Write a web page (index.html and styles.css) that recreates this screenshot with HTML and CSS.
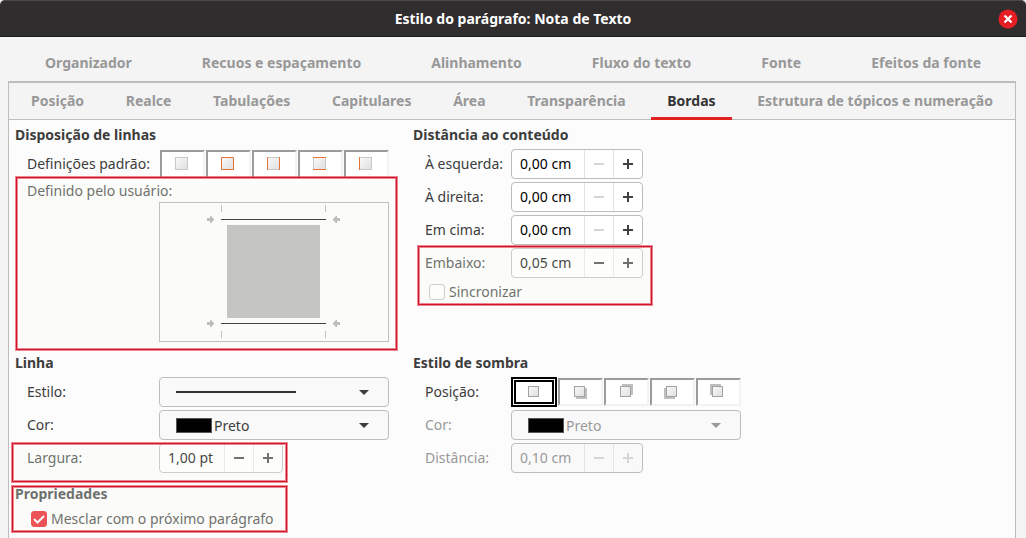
FILE: index.html
```html
<!DOCTYPE html>
<html lang="pt-BR">
<head>
<meta charset="utf-8">
<title>Estilo do parágrafo: Nota de Texto</title>
<link rel="stylesheet" href="styles.css">
</head>
<body>
<main class="dialog">
  <header class="titlebar">
    <h1 class="title">Estilo do parágrafo: Nota de Texto</h1>
    <button class="close" type="button" aria-label="Fechar">
      <svg width="20" height="20" viewBox="0 0 20 20"><circle cx="10" cy="10" r="9.5" fill="#e71d24"/><path d="M6.5 6.5l7 7M13.5 6.5l-7 7" stroke="#fff" stroke-width="2.2"/></svg>
    </button>
  </header>

  <nav class="tabs tabs-upper">
    <button class="tab" type="button">Organizador</button>
    <button class="tab" type="button">Recuos e espaçamento</button>
    <button class="tab" type="button">Alinhamento</button>
    <button class="tab" type="button">Fluxo do texto</button>
    <button class="tab" type="button">Fonte</button>
    <button class="tab" type="button">Efeitos da fonte</button>
  </nav>

  <div class="notebook">
    <nav class="tabs tabs-lower">
      <button class="tab" type="button">Posição</button>
      <button class="tab" type="button">Realce</button>
      <button class="tab" type="button">Tabulações</button>
      <button class="tab" type="button">Capitulares</button>
      <button class="tab" type="button">Área</button>
      <button class="tab" type="button">Transparência</button>
      <button class="tab active" type="button">Bordas</button>
      <button class="tab" type="button">Estrutura de tópicos e numeração</button>
    </nav>

    <div class="page">
      <section class="panel">
        <h2 class="heading">Disposição de linhas</h2>
        <div class="row">
          <span class="label">Definições padrão:</span>
          <div class="presets borders">
            <button class="preset" type="button" aria-label="Sem bordas"><svg width="15" height="15" viewBox="-1 -1 15 15"><use href="#cell"/></svg></button>
            <button class="preset" type="button" aria-label="Caixa"><svg width="15" height="15" viewBox="-1 -1 15 15"><use href="#cell"/><path class="edge" d="M.5.5h12v12H.5z"/></svg></button>
            <button class="preset" type="button" aria-label="Esquerda e direita"><svg width="15" height="15" viewBox="-1 -1 15 15"><use href="#cell"/><path class="edge" d="M.5 0v13M12.5 0v13"/></svg></button>
            <button class="preset" type="button" aria-label="Em cima e embaixo"><svg width="15" height="15" viewBox="-1 -1 15 15"><use href="#cell"/><path class="edge" d="M0 .5h13M0 12.5h13"/></svg></button>
            <button class="preset" type="button" aria-label="Esquerda"><svg width="15" height="15" viewBox="-1 -1 15 15"><use href="#cell"/><path class="edge" d="M.5 0v13"/></svg></button>
          </div>
        </div>
        <div class="custom marked">
          <span class="label">Definido pelo usuário:</span>
          <svg class="frame" viewBox="0 0 230 140" role="img" aria-label="Bordas definidas pelo usuário">
            <rect x=".5" y=".5" width="229" height="139" fill="none" stroke="#acaca8"/>
            <rect x="68" y="23" width="93" height="93" fill="#b3b3b0"/>
            <path d="M62.500 3v7M166.500 3v7M62.500 129v7M166.500 129v7" stroke="#acaca8"/>
            <path d="M62 17.500h105M62 121.500h105" stroke="#000"/>
            <g fill="#a8a8a4"><path id="arrow" d="M48 16h3v-2h1l3 3v1l-3 3h-1v-2h-3z"/><use href="#arrow" y="104"/><path id="back" d="M181 16h-3v-2h-1l-3 3v1l3 3h1v-2h3z"/><use href="#back" y="104"/></g>
          </svg>
          <span class="mark"></span>
        </div>
      </section>

      <section class="panel">
        <h2 class="heading">Distância ao conteúdo</h2>
        <div class="row">
          <label class="label" for="left">À esquerda:</label>
          <div class="spin"><input id="left" value="0,00 cm"><button type="button" disabled aria-label="Diminuir"><svg class="sign"><use href="#minus"/></svg></button><button type="button" aria-label="Aumentar"><svg class="sign"><use href="#plus"/></svg></button></div>
        </div>
        <div class="row">
          <label class="label" for="right">À direita:</label>
          <div class="spin"><input id="right" value="0,00 cm"><button type="button" disabled aria-label="Diminuir"><svg class="sign"><use href="#minus"/></svg></button><button type="button" aria-label="Aumentar"><svg class="sign"><use href="#plus"/></svg></button></div>
        </div>
        <div class="row">
          <label class="label" for="top">Em cima:</label>
          <div class="spin"><input id="top" value="0,00 cm"><button type="button" disabled aria-label="Diminuir"><svg class="sign"><use href="#minus"/></svg></button><button type="button" aria-label="Aumentar"><svg class="sign"><use href="#plus"/></svg></button></div>
        </div>
        <div class="bottom marked">
          <div class="row">
            <label class="label" for="bottom">Embaixo:</label>
            <div class="spin"><input id="bottom" value="0,05 cm"><button type="button" aria-label="Diminuir"><svg class="sign"><use href="#minus"/></svg></button><button type="button" aria-label="Aumentar"><svg class="sign"><use href="#plus"/></svg></button></div>
          </div>
          <label class="check"><input type="checkbox">Sincronizar</label>
          <span class="mark"></span>
        </div>
      </section>

      <section class="panel">
        <h2 class="heading">Linha</h2>
        <div class="row">
          <label class="label" for="style">Estilo:</label>
          <div class="combo"><span class="line"></span><select id="style"><option label=" "></option></select></div>
        </div>
        <div class="row">
          <label class="label" for="color">Cor:</label>
          <div class="combo"><span class="swatch"></span><select id="color"><option>Preto</option></select></div>
        </div>
        <div class="width marked">
          <div class="row">
            <label class="label" for="width">Largura:</label>
            <div class="spin narrow"><input id="width" value="1,00 pt"><button type="button" aria-label="Diminuir"><svg class="sign"><use href="#minus"/></svg></button><button type="button" aria-label="Aumentar"><svg class="sign"><use href="#plus"/></svg></button></div>
          </div>
          <span class="mark"></span>
        </div>
        <div class="properties marked">
          <h2 class="heading">Propriedades</h2>
          <label class="check"><input type="checkbox" checked>Mesclar com o próximo parágrafo</label>
          <span class="mark"></span>
        </div>
      </section>

      <section class="panel">
        <h2 class="heading">Estilo de sombra</h2>
        <div class="row">
          <span class="label">Posição:</span>
          <div class="presets">
            <button class="preset selected" type="button" aria-label="Sem sombra"><svg width="15" height="15"><use href="#tile"/></svg></button>
            <button class="preset" type="button" aria-label="Sombra embaixo à direita"><svg width="15" height="15"><path class="shade" d="M4 4h11v11H4z"/><use href="#tile"/></svg></button>
            <button class="preset" type="button" aria-label="Sombra em cima à direita"><svg width="15" height="15"><path class="shade" d="M4 0h11v11H4z"/><use href="#tile"/></svg></button>
            <button class="preset" type="button" aria-label="Sombra embaixo à esquerda"><svg width="15" height="15"><path class="shade" d="M0 4h11v11H0z"/><use href="#tile"/></svg></button>
            <button class="preset" type="button" aria-label="Sombra em cima à esquerda"><svg width="15" height="15"><path class="shade" d="M0 0h11v11H0z"/><use href="#tile"/></svg></button>
          </div>
        </div>
        <div class="row off">
          <label class="label" for="shadow-color">Cor:</label>
          <div class="combo"><span class="swatch"></span><select id="shadow-color" disabled><option>Preto</option></select></div>
        </div>
        <div class="row off">
          <label class="label" for="distance">Distância:</label>
          <div class="spin"><input id="distance" value="0,10 cm" disabled><button type="button" disabled aria-label="Diminuir"><svg class="sign"><use href="#minus"/></svg></button><button type="button" disabled aria-label="Aumentar"><svg class="sign"><use href="#plus"/></svg></button></div>
        </div>
      </section>
    </div>
  </div>
</main>

<svg class="symbols" width="0" height="0">
  <defs>
    <linearGradient id="face" x2="1" y2="1"><stop stop-color="#fafafa"/><stop offset="1" stop-color="#dedede"/></linearGradient>
    <symbol id="cell" viewBox="0 0 13 13" width="13" height="13"><rect x=".5" y=".5" width="12" height="12" fill="url(#face)" stroke="#c8c8c8"/></symbol>
    <symbol id="tile" viewBox="0 0 15 15" width="15" height="15"><rect x="2.500" y="2.500" width="10" height="10" fill="url(#face)" stroke="#a3a3a3"/></symbol>
    <symbol id="minus" viewBox="0 0 10 10"><path d="M0 4h10v2H0z" fill="currentColor"/></symbol>
    <symbol id="plus" viewBox="0 0 10 10"><path d="M0 4h4V0h2v4h4v2H6v4H4V6H0z" fill="currentColor"/></symbol>
  </defs>
</svg>
</body>
</html>
```

FILE: styles.css
```css
* { box-sizing: border-box; }

body {
  margin: 0;
  background: #f4f4f4;
  color: #3d3d3d;
  font: 14px/20px "Noto Sans", "Open Sans", sans-serif;
}

button, input, select { font: inherit; color: inherit; margin: 0; }
button { padding: 0; border: 0; background: none; }

.dialog { display: flex; flex-direction: column; min-height: 100vh; overflow: hidden; }

.titlebar {
  display: grid;
  grid-template-columns: 30px 1fr 30px;
  align-items: center;
  height: 37px;
  border-top: 1px solid #4a4849;
  border-bottom: 1px solid #1c1a1b;
  border-radius: 5px 5px 0 0;
  background: #302d2e;
  color: #fff;
}
.title { grid-column: 2; margin: 0; font-size: 14px; line-height: 20px; font-weight: 700; text-align: center; }
.close { display: flex; padding-left: 2px; }

.tabs { display: flex; }
.tab { color: #989898; font-weight: 700; white-space: nowrap; }
.tabs-upper { height: 44px; padding: 8px 10px 0; }
.tabs-upper .tab { flex: 1 1 auto; }
.tabs-lower { height: 37px; padding: 0 6px; justify-content: space-between; border-bottom: 1px solid #bdbdbd; }
.tabs-lower .tab { height: 37px; padding: 1px 16px 0; border-bottom: 3px solid transparent; }
.tabs-lower .active { color: #333; border-bottom-color: #e32222; }

.notebook {
  flex: 1;
  display: flex;
  flex-direction: column;
  margin: 0 10px 0 8px;
  border: 1px solid #bdbdbd;
  border-width: 2px 1px 0;
}

.page {
  flex: 1;
  display: grid;
  grid-template-columns: 398px 1fr;
  grid-template-rows: 228px auto;
  padding: 5px 6px 0;
  background: #fcfcfc;
}

.heading { margin: 0; height: 24px; font-size: 14px; line-height: 20px; font-weight: 700; white-space: nowrap; }
.panel .row { display: grid; grid-template-columns: 132px auto; justify-content: start; height: 30px; margin-bottom: 3px; padding-left: 12px; line-height: 30px; }
.panel:nth-child(even) .row { grid-template-columns: 86px auto; }
.label { white-space: nowrap; }

.presets { display: flex; align-items: center; gap: 1px; }
.borders { padding-left: 1px; }
.preset {
  display: flex; align-items: flex-start; justify-content: center;
  width: 45px; height: 28px; padding: 4px 2px 0 0;
  border: 2px solid #f2f2f2;
  border-top-color: #9b9b9b; border-left-color: #9b9b9b;
  background: #fff;
}
.selected { width: 46px; height: 30px; padding: 2px 1px 0 0; border: 5px double #000; }
.edge { fill: none; stroke: #e6743a; }
.shade { fill: #bfbfbf; }

.marked { position: relative; }
.mark {
  position: absolute;
  border: 1px solid #d3152c;
  box-shadow: 0 0 0 1px rgba(220, 40, 60, 0.55), inset 0 0 0 1px rgba(220, 40, 60, 0.55);
  background: rgba(249, 250, 242, 0.27);
  pointer-events: none;
}

.custom { margin-top: -1px; padding-left: 12px; }
.custom .label { display: block; height: 21px; line-height: 20px; }
.custom .frame { display: block; width: 230px; margin-left: 132px; }
.custom .mark { inset: -4px 16px -8px 1px; }

.bottom .mark { inset: -2px auto -2px 5px; width: 234px; }
.width .mark { inset: 0 auto -9px -3px; width: 275px; }
.properties { padding-top: 8px; }
.properties .mark { inset: 10px auto -2px -3px; width: 275px; }

.spin { display: flex; width: 132px; height: 30px; border: 1px solid #bdbdbd; border-radius: 4px; background: #fff; }
.spin input { flex: 1; min-width: 0; padding: 0 0 0 8px; border: 0; background: none; color: #000; }
.spin button { display: flex; align-items: center; justify-content: center; width: 29px; border-left: 1px solid #e4e4e4; color: #404040; }
.spin button:disabled { color: #d6d6d6; }
.narrow { width: 124px; }
.sign { width: 10px; height: 10px; }

.combo { position: relative; display: flex; align-items: center; width: 230px; height: 30px; padding-left: 16px; border: 1px solid #bdbdbd; border-radius: 4px; background: #f9f9f9; }
.combo::after { content: ""; position: absolute; right: 19px; border: 5px solid transparent; border-top-color: currentColor; border-bottom-width: 0; }
.combo select { flex: 1; height: 28px; padding: 0 0 0 2px; border: 0; background: none; appearance: none; opacity: 1; }
.line { width: 120px; height: 2px; background: #333; }
.swatch { width: 36px; height: 15px; border: 1px solid #555; background: #000; }

.off { color: #999; }
.off .spin { background: #f9f9f9; }
.off .spin input { color: #999; }

.check { display: flex; align-items: center; gap: 4px; height: 22px; padding-left: 16px; white-space: nowrap; }
.check input { appearance: none; width: 16px; height: 16px; margin: 0; border: 1px solid #bdbdbd; border-radius: 3px; background: #fff; }
.check input:checked {
  border-color: #e81820;
  background: #e81820 url("data:image/svg+xml,%3Csvg xmlns='http://www.w3.org/2000/svg' viewBox='0 0 14 14'%3E%3Cpath d='M2 7l3.500 3.500L12 4' fill='none' stroke='white' stroke-width='2'/%3E%3C/svg%3E") center / 14px;
}

.symbols { position: absolute; }
```
